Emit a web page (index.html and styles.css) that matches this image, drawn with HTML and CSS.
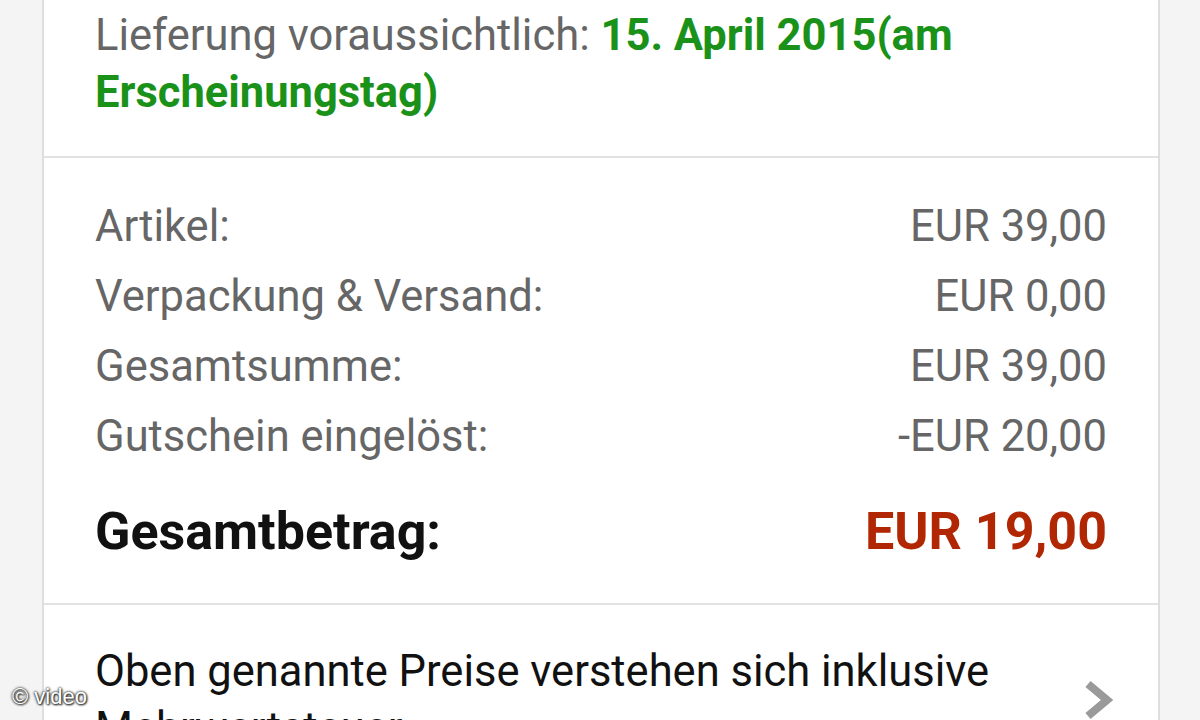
FILE: index.html
```html
<!DOCTYPE html>
<html lang="de">
<head>
    <meta charset="UTF-8">
    <title>Bestellübersicht</title>
    <link rel="stylesheet" href="styles.css">
</head>
<body>
    <div class="card">
        <div class="section delivery">
            Lieferung voraussichtlich: <span class="green">15. April 2015(am Erscheinungstag)</span>
        </div>
        <div class="section summary">
            <div class="row"><span>Artikel:</span><span>EUR 39,00</span></div>
            <div class="row"><span>Verpackung &amp; Versand:</span><span>EUR 0,00</span></div>
            <div class="row"><span>Gesamtsumme:</span><span>EUR 39,00</span></div>
            <div class="row"><span>Gutschein eingelöst:</span><span>-EUR 20,00</span></div>
            <div class="row total"><span>Gesamtbetrag:</span><span class="price">EUR 19,00</span></div>
        </div>
        <div class="section note">
            <p>Oben genannte Preise verstehen sich inklusive Mehrwertsteuer.</p>
            <svg class="chev" width="30" height="40" viewBox="0 0 30 40">
                <polyline points="5,4 24,20 5,36" fill="none" stroke="#9a9a9a" stroke-width="8"/>
            </svg>
        </div>
    </div>
    <div class="watermark">© video</div>
</body>
</html>
```
FILE: styles.css
```css
body { margin: 0; background: #f4f4f4; font-family: Roboto, "Noto Sans", sans-serif; overflow: hidden; }
.card { margin-left: 42px; width: 1114px; background: #fff; border-left: 2px solid #dedede; border-right: 2px solid #dedede; }
.section { padding: 0 51px; border-bottom: 2px solid #e2e2e2; }
.delivery { font-size: 43.5px; line-height: 57px; color: #666; padding-top: 7px; padding-bottom: 35px; }
.green { color: #1a921a; font-weight: bold; }
.summary { padding-top: 34px; padding-bottom: 36px; }
.row { display: flex; justify-content: space-between; font-size: 43.5px; line-height: 70px; color: #666; }
.total { margin-top: 25px; font-size: 52px; font-weight: bold; color: #111; }
.price { color: #b12704; }
.note { display: flex; align-items: center; padding-top: 38px; padding-bottom: 30px; }
.note p { margin: 0; flex: 1; font-size: 43.5px; line-height: 57px; color: #111; padding-right: 60px; }
.chev { flex: none; margin-right: -6px; }
.watermark { position: absolute; left: 12px; top: 684px; font-family: "Liberation Sans", Arial, sans-serif; font-size: 22px; color: #fff; text-shadow: 0 0 2px #333, 0 0 3px #333, 1px 1px 2px #222; }
```
